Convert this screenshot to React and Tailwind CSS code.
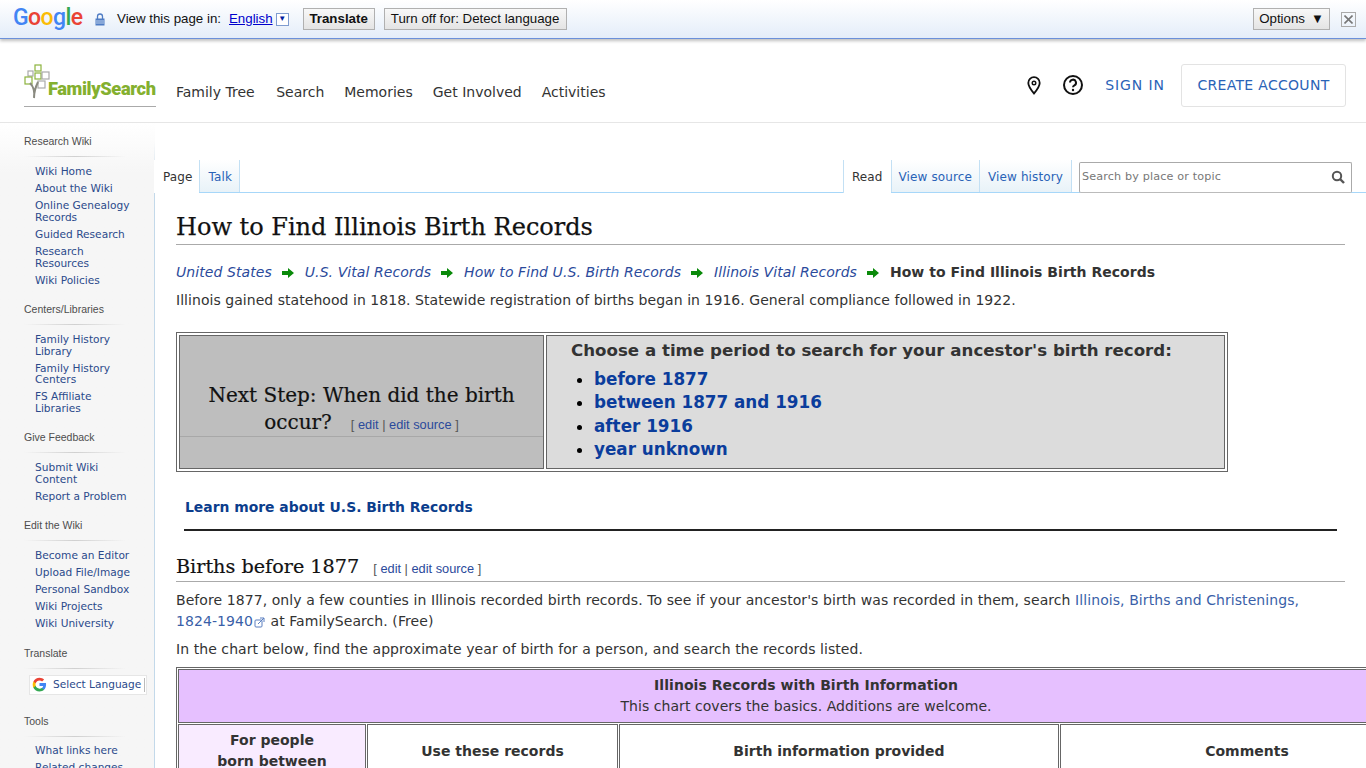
import React from "react";

const V = "[font-family:'DejaVu_Sans',Verdana,sans-serif]";
const S = "[font-family:'DejaVu_Serif',serif]";
const A = "[font-family:'Liberation_Sans',Arial,sans-serif]";

const TIGHT = "pt-[9px] leading-[11.5px] [&>li]:pb-[5.5px]";
const LOOSE = "pt-[8px] leading-[12px] [&>li]:pb-[5px]";
const LAST = "pt-[7px] leading-[12px] [&>li]:pb-[5px]";

const groups = [
  { t: "Research Wiki", lh: LOOSE, mb: "mb-[12px]", items: [["Wiki Home"], ["About the Wiki"], ["Online Genealogy", "Records"], ["Guided Research"], ["Research", "Resources"], ["Wiki Policies"]] },
  { t: "Centers/Libraries", lh: TIGHT, mb: "mb-[11px]", items: [["Family History", "Library"], ["Family History", "Centers"], ["FS Affiliate", "Libraries"]] },
  { t: "Give Feedback", lh: LOOSE, mb: "mb-[12px]", items: [["Submit Wiki", "Content"], ["Report a Problem"]] },
  { t: "Edit the Wiki", lh: LOOSE, mb: "mb-[13px]", items: [["Become an Editor"], ["Upload File/Image"], ["Personal Sandbox"], ["Wiki Projects"], ["Wiki University"]] },
];

function SideHead({ t }) {
  return (
    <div>
      <div className={`pl-6 text-[10.5px] leading-[12px] text-[#4d4d4d] ${A}`}>{t}</div>
      <div className="ml-6 mr-7 mt-[9px] h-px bg-gradient-to-r from-transparent via-[#d0d0d0] to-transparent" />
    </div>
  );
}

function SideGroup({ t, items, lh, mb }) {
  return (
    <div className={mb}>
      <SideHead t={t} />
      <ul className={`pl-[35px] text-[10.6px] text-[#2b4a8b] ${lh}`}>
        {items.map((l, i) => (
          <li key={i}>
            {l.map((x, j) => <div key={j}>{x}</div>)}
          </li>
        ))}
      </ul>
    </div>
  );
}

function Arrow() {
  return (
    <svg width="12" height="10" viewBox="0 0 12 10" className="ml-[10px] mr-[11px] inline-block">
      <path d="M0 3h6V0l6 5-6 5V7H0z" fill="#0a8a0a" />
    </svg>
  );
}

function EditLinks() {
  return (
    <span className={`text-[12.8px] leading-none ${A} text-[#555] font-normal [-webkit-text-stroke:0]`}>
      [ <span className="text-[#2b4a9b]">edit</span> | <span className="text-[#2b4a9b]">edit source</span> ]
    </span>
  );
}

function TbButton({ children, bold, cls = "" }) {
  return (
    <div className={`h-[22px] flex items-center justify-center border border-[#b0b0b0] bg-gradient-to-b from-[#f8f8f8] to-[#e4e4e4] text-[13.3px] text-[#111] ${bold ? "font-bold" : ""} ${cls}`}>
      {children}
    </div>
  );
}

export default function App() {
  return (
    <div className={`relative w-[1366px] h-[768px] overflow-hidden bg-white ${V} text-[#333]`}>
      {/* translate bar */}
      <div className={`relative z-10 h-[39px] flex items-center bg-gradient-to-b from-white to-[#e4edf9] border-b border-[#6b90da] shadow-[0_2px_3px_rgba(0,0,0,0.25)] ${A}`}>
        <div className="ml-[13px] w-[68px] text-[23px] leading-none font-medium [font-family:Roboto,sans-serif] tracking-[-0.6px] pb-[3px]">
          <span className="text-[#4285f4]">G</span>
          <span className="text-[#ea4335]">o</span>
          <span className="text-[#fbbc05]">o</span>
          <span className="text-[#4285f4]">g</span>
          <span className="text-[#34a853]">l</span>
          <span className="text-[#ea4335]">e</span>
        </div>
        <svg width="10" height="13" viewBox="0 0 10 13" className="ml-[14px]">
          <path d="M2.5 6V3.5a2.5 2.5 0 0 1 5 0V6" fill="none" stroke="#4f7cc4" strokeWidth="1.3" />
          <rect x="0.5" y="5.5" width="9" height="7" fill="#4f7cc4" />
          <path d="M1 8h8M1 10h8" stroke="#dfe8f6" strokeWidth="0.8" />
        </svg>
        <span className="ml-[12px] text-[13.3px] text-[#111]">View this page in:</span>
        <span className="ml-[8px] text-[13.3px] text-[#0000cc] underline">English</span>
        <span className="ml-[3px] w-[13px] h-[13px] border border-[#7f9ccf] bg-white flex items-center justify-center text-[8px] leading-none text-[#00209f]">▼</span>
        <TbButton bold cls="ml-[14px] w-[72px]">Translate</TbButton>
        <TbButton cls="ml-[9px] w-[183px]">Turn off for: Detect language</TbButton>
        <div className="flex-1" />
        <TbButton cls="w-[77px] gap-[6px]">Options <span className="text-[13px]">▼</span></TbButton>
        <div className="ml-[11px] mr-[10px] w-[15px] h-[15px] border border-[#aaa] flex items-center justify-center">
          <svg width="9" height="9" viewBox="0 0 9 9"><path d="M0.5 0.5l8 8M8.5 0.5l-8 8" stroke="#777" strokeWidth="1.6" /></svg>
        </div>
      </div>

      {/* header */}
      <header className="h-[84px] flex border-b border-[#e6e6e6]">
        <div className="ml-[24px] mt-[25px] w-[132px] h-[43px] border-b border-[#aaa] relative">
          <svg width="34" height="36" viewBox="0 0 34 36" className="absolute left-0 top-0" fill="none">
            <rect x="11" y="1" width="6" height="6" stroke="#8cb33d" strokeWidth="1.2" />
            <rect x="4" y="7" width="5" height="5" stroke="#aaa" strokeWidth="1.2" />
            <rect x="11" y="9" width="6" height="6" stroke="#8cb33d" strokeWidth="1.2" />
            <rect x="18" y="8" width="7" height="7" stroke="#aaa" strokeWidth="1.2" />
            <rect x="1" y="13" width="7" height="7" stroke="#8cb33d" strokeWidth="1.2" />
            <rect x="14" y="17" width="7" height="7" stroke="#aaa" strokeWidth="1.2" />
            <path d="M10 34c1-7 0-11-4-15M10 34c0-6 1-10 4-16" stroke="#8a8a80" strokeWidth="2" />
          </svg>
          <span className="absolute left-[24px] top-[15px] text-[18.3px] leading-[20px] font-black text-[#84b02f] [font-family:Roboto,sans-serif] tracking-[-0.4px]">FamilySearch</span>
        </div>
        <nav className="ml-[20px] mt-[45px] flex gap-[20px] text-[14px] leading-[17px] text-[#333] h-[17px]">
          <span className="mr-[1.5px]">Family Tree</span><span>Search</span><span>Memories</span><span>Get Involved</span><span>Activities</span>
        </nav>
        <div className="flex-1" />
        <div className="mr-[20px] mt-[24px] flex items-center h-[44px] text-[14px] text-[#2a63b7]">
          <svg width="14" height="19" viewBox="0 0 14 19" fill="none">
            <path d="M7 1.200a5.700 5.700 0 0 0-5.700 5.800c0 3.600 3.400 7.700 5.700 10.500 2.300-2.800 5.700-6.900 5.700-10.500A5.700 5.700 0 0 0 7 1.200z" stroke="#111" strokeWidth="1.800" />
            <circle cx="7" cy="7" r="1.800" stroke="#111" strokeWidth="1.400" />
          </svg>
          <svg width="22" height="22" viewBox="0 0 22 22" className="ml-[21px]" fill="none">
            <circle cx="11" cy="11" r="9" stroke="#111" strokeWidth="2" />
            <path d="M8 8.600a3 3 0 1 1 4.400 2.700c-.9.500-1.400 1-1.400 2" stroke="#111" strokeWidth="2" />
            <circle cx="11" cy="16" r="1.200" fill="#111" />
          </svg>
          <span className="ml-[21px] tracking-[0.9px]">SIGN IN</span>
          <span className="ml-[16px] h-[43px] w-[165px] border border-[#e3e3e3] rounded-[3px] flex items-center justify-center tracking-[0.3px]">CREATE ACCOUNT</span>
        </div>
      </header>

      <div className="flex">
        {/* sidebar */}
        <aside className="w-[155px] h-[645px] shrink-0 overflow-hidden bg-gradient-to-b from-white to-[#f6f6f6] to-[50px] border-r [border-image:linear-gradient(to_bottom,transparent_20px,#c3d9ea_70px)_1] pt-[12px]">
          {groups.map((g) => <SideGroup key={g.t} {...g} />)}
          <div className="mb-[20px]">
            <SideHead t="Translate" />
            <div className="ml-[29px] mt-[6px] w-[118px] h-[20px] bg-white border border-[#e6e6e6] flex items-center text-[10.6px] text-[#2b4a8b] whitespace-nowrap">
              <svg width="15" height="15" viewBox="0 0 48 48" className="ml-[2px] shrink-0">
                <path fill="#4285F4" d="M45 24c0-1.600-.1-3-.4-4.500H24v9h11.800c-.5 2.700-2.100 5-4.400 6.500v5.500h7.100C42.700 36.600 45 30.800 45 24z" />
                <path fill="#34A853" d="M24 46c5.900 0 10.900-2 14.500-5.300l-7.100-5.500c-2 1.300-4.500 2.100-7.400 2.100-5.700 0-10.500-3.800-12.200-9H4.500v5.700C8.100 41.200 15.500 46 24 46z" />
                <path fill="#FBBC05" d="M11.800 28.300c-.9-2.700-.9-5.900 0-8.600V14H4.500c-3 6-3 14 0 20z" />
                <path fill="#EA4335" d="M24 10.800c3.200 0 6.100 1.100 8.400 3.300l6.300-6.300C34.900 4.200 29.900 2 24 2 15.500 2 8.100 6.800 4.500 14l7.300 5.700c1.700-5.100 6.500-8.900 12.200-8.900z" />
              </svg>
              <span className="ml-[6px]">Select Language</span>
              <span className="ml-[3px] w-px h-[14px] bg-[#bbb] shrink-0" />
            </div>
          </div>
          <SideGroup t="Tools" lh={LAST} mb="" items={[["What links here"], ["Related changes"]]} />
        </aside>

        {/* main */}
        <main className="flex-1 min-w-0 pt-[37px]">
          <div className="h-[33px] flex text-[12px] border-b border-[#a7d7f9] -ml-px tracking-[0.12px]">
            <div className="h-[33px] pl-[9px] pr-[6px] pt-[1px] flex items-center bg-white text-[#333]">Page</div>
            <div className="h-[32px] pl-[9px] pr-[7px] pt-[1px] flex items-center bg-gradient-to-b from-white to-[#e8f2f8] border-x border-[#c3e0f4] text-[#2a63b7]">Talk</div>
            <div className="flex-1" />
            <div className="h-[33px] px-[8px] pt-[1px] flex items-center bg-white border-l border-[#c3e0f4] text-[#333]">Read</div>
            <div className="h-[32px] px-[7px] pt-[1px] flex items-center bg-gradient-to-b from-white to-[#e8f2f8] border-l border-[#c3e0f4] text-[#2a63b7]">View source</div>
            <div className="h-[32px] px-[8px] pt-[1px] flex items-center bg-gradient-to-b from-white to-[#e8f2f8] border-x border-[#c3e0f4] text-[#2a63b7]">View history</div>
            <div className="ml-[7px] mr-[14px] mt-[2px] w-[273px] h-[31px] border border-[#aaa] border-b-[#bbb] rounded-[2px] bg-white flex items-center justify-between px-[2px] text-[11.2px] text-[#777] tracking-[0.15px]">
              <span>Search by place or topic</span>
              <svg width="14" height="14" viewBox="0 0 14 14" fill="none" className="mr-[4px] -mt-px">
                <circle cx="6" cy="6" r="4.200" stroke="#555" strokeWidth="2" />
                <path d="M9 9l4 4" stroke="#555" strokeWidth="2.400" />
              </svg>
            </div>
          </div>

          <div className="pl-[21px] pr-[21px]">
            <h1 className={`mt-[17px] border-b border-[#aaa] text-[24px] leading-[34px] text-[#111] ${S} [-webkit-text-stroke:0.25px_#111]`}>How to Find Illinois Birth Records</h1>

            <div className="mt-[17px] text-[14px] leading-[21px] flex items-center tracking-[0.075px]">
              <i className="text-[#2b4a9b]">United States</i><Arrow />
              <i className="text-[#2b4a9b]">U.S. Vital Records</i><Arrow />
              <i className="text-[#2b4a9b]">How to Find U.S. Birth Records</i><Arrow />
              <i className="text-[#2b4a9b]">Illinois Vital Records</i><Arrow />
              <b className="text-[#333] tracking-[0.03px]">How to Find Illinois Birth Records</b>
            </div>
            <p className="mt-[7px] text-[14px] leading-[21px] tracking-[0.042px]">Illinois gained statehood in 1818. Statewide registration of births began in 1916. General compliance followed in 1922.</p>

            <table className="mt-[21px] w-[1052px] h-[140px] border border-[#666] border-separate border-spacing-[2px]">
              <tbody>
                <tr>
                  <td className="w-[365px] border border-[#666] bg-[#bebebe] align-top p-0 text-center">
                    <div className={`mt-[46px] border-b border-[#a8a8a8] text-[20px] leading-[27px] text-[#111] ${S} px-[8px] [-webkit-text-stroke:0.2px_#111]`}>
                      Next Step: When did the birth occur?
                      <span className="ml-[19px]"><EditLinks /></span>
                    </div>
                  </td>
                  <td className="border border-[#666] bg-[#dcdcdc] align-top p-0 pl-[24px] pt-[3px]">
                    <div className="text-[16.65px] leading-[23.5px] font-bold text-[#333]">Choose a time period to search for your ancestor's birth record:</div>
                    <ul className="mt-[5px] list-disc marker:text-black pl-[23px] text-[16.8px] leading-[23.6px] font-bold text-[#0b3d9c]">
                      <li>before 1877</li>
                      <li>between 1877 and 1916</li>
                      <li>after 1916</li>
                      <li>year unknown</li>
                    </ul>
                  </td>
                </tr>
              </tbody>
            </table>

            <div className="mt-[25px] pl-[9px] text-[13.9px] leading-[21px] font-bold text-[#0b3d8c]">Learn more about U.S. Birth Records</div>
            <div className="mt-[11px] mx-[8px] h-[2px] bg-[#222]" />

            <h2 className={`mt-[21px] border-b border-[#aaa] text-[19.2px] leading-[29px] text-[#111] ${S} font-normal [-webkit-text-stroke:0.2px_#111]`}>
              Births before 1877 <span className="ml-[8px]"><EditLinks /></span>
            </h2>
            <p className="mt-[8px] text-[14px] leading-[21px] tracking-[0.075px]">
              Before 1877, only a few counties in Illinois recorded birth records. To see if your ancestor's birth was recorded in them, search <span className="text-[#3a5fa8]">Illinois, Births and Christenings, <span className="whitespace-nowrap">1824-1940</span></span>
              <svg width="11" height="11" viewBox="0 0 11 11" fill="none" className="inline-block mx-[1px]">
                <rect x="1" y="3" width="7" height="7" rx="1" stroke="#5a7fc0" />
                <path d="M4 7l6-6M6 1h4v4" stroke="#5a7fc0" />
              </svg>{" "}
              at FamilySearch. (Free)
            </p>
            <p className="mt-[7px] text-[14px] leading-[21px] tracking-[0.07px]">In the chart below, find the approximate year of birth for a person, and search the records listed.</p>

            <table className="mt-[7px] w-[1260px] border border-[#666] border-separate border-spacing-[1px] text-[14px] text-center">
              <tbody>
                <tr>
                  <td colSpan={4} className="h-[54px] bg-[#e6c0ff] border border-[#666] leading-[21px] p-0 tracking-[0.06px]">
                    <b>Illinois Records with Birth Information</b><br />This chart covers the basics. Additions are welcome.
                  </td>
                </tr>
                <tr className="font-bold">
                  <td className="w-[188px] h-[54px] bg-[#f9ebff] border border-[#666] leading-[21px] p-0 align-top pt-[5px]">For people<br />born between</td>
                  <td className="w-[251px] border border-[#666] p-0">Use these records</td>
                  <td className="w-[440px] border border-[#666] p-0">Birth information provided</td>
                  <td className="border border-[#666] p-0">Comments</td>
                </tr>
              </tbody>
            </table>
          </div>
        </main>
      </div>
    </div>
  );
}
